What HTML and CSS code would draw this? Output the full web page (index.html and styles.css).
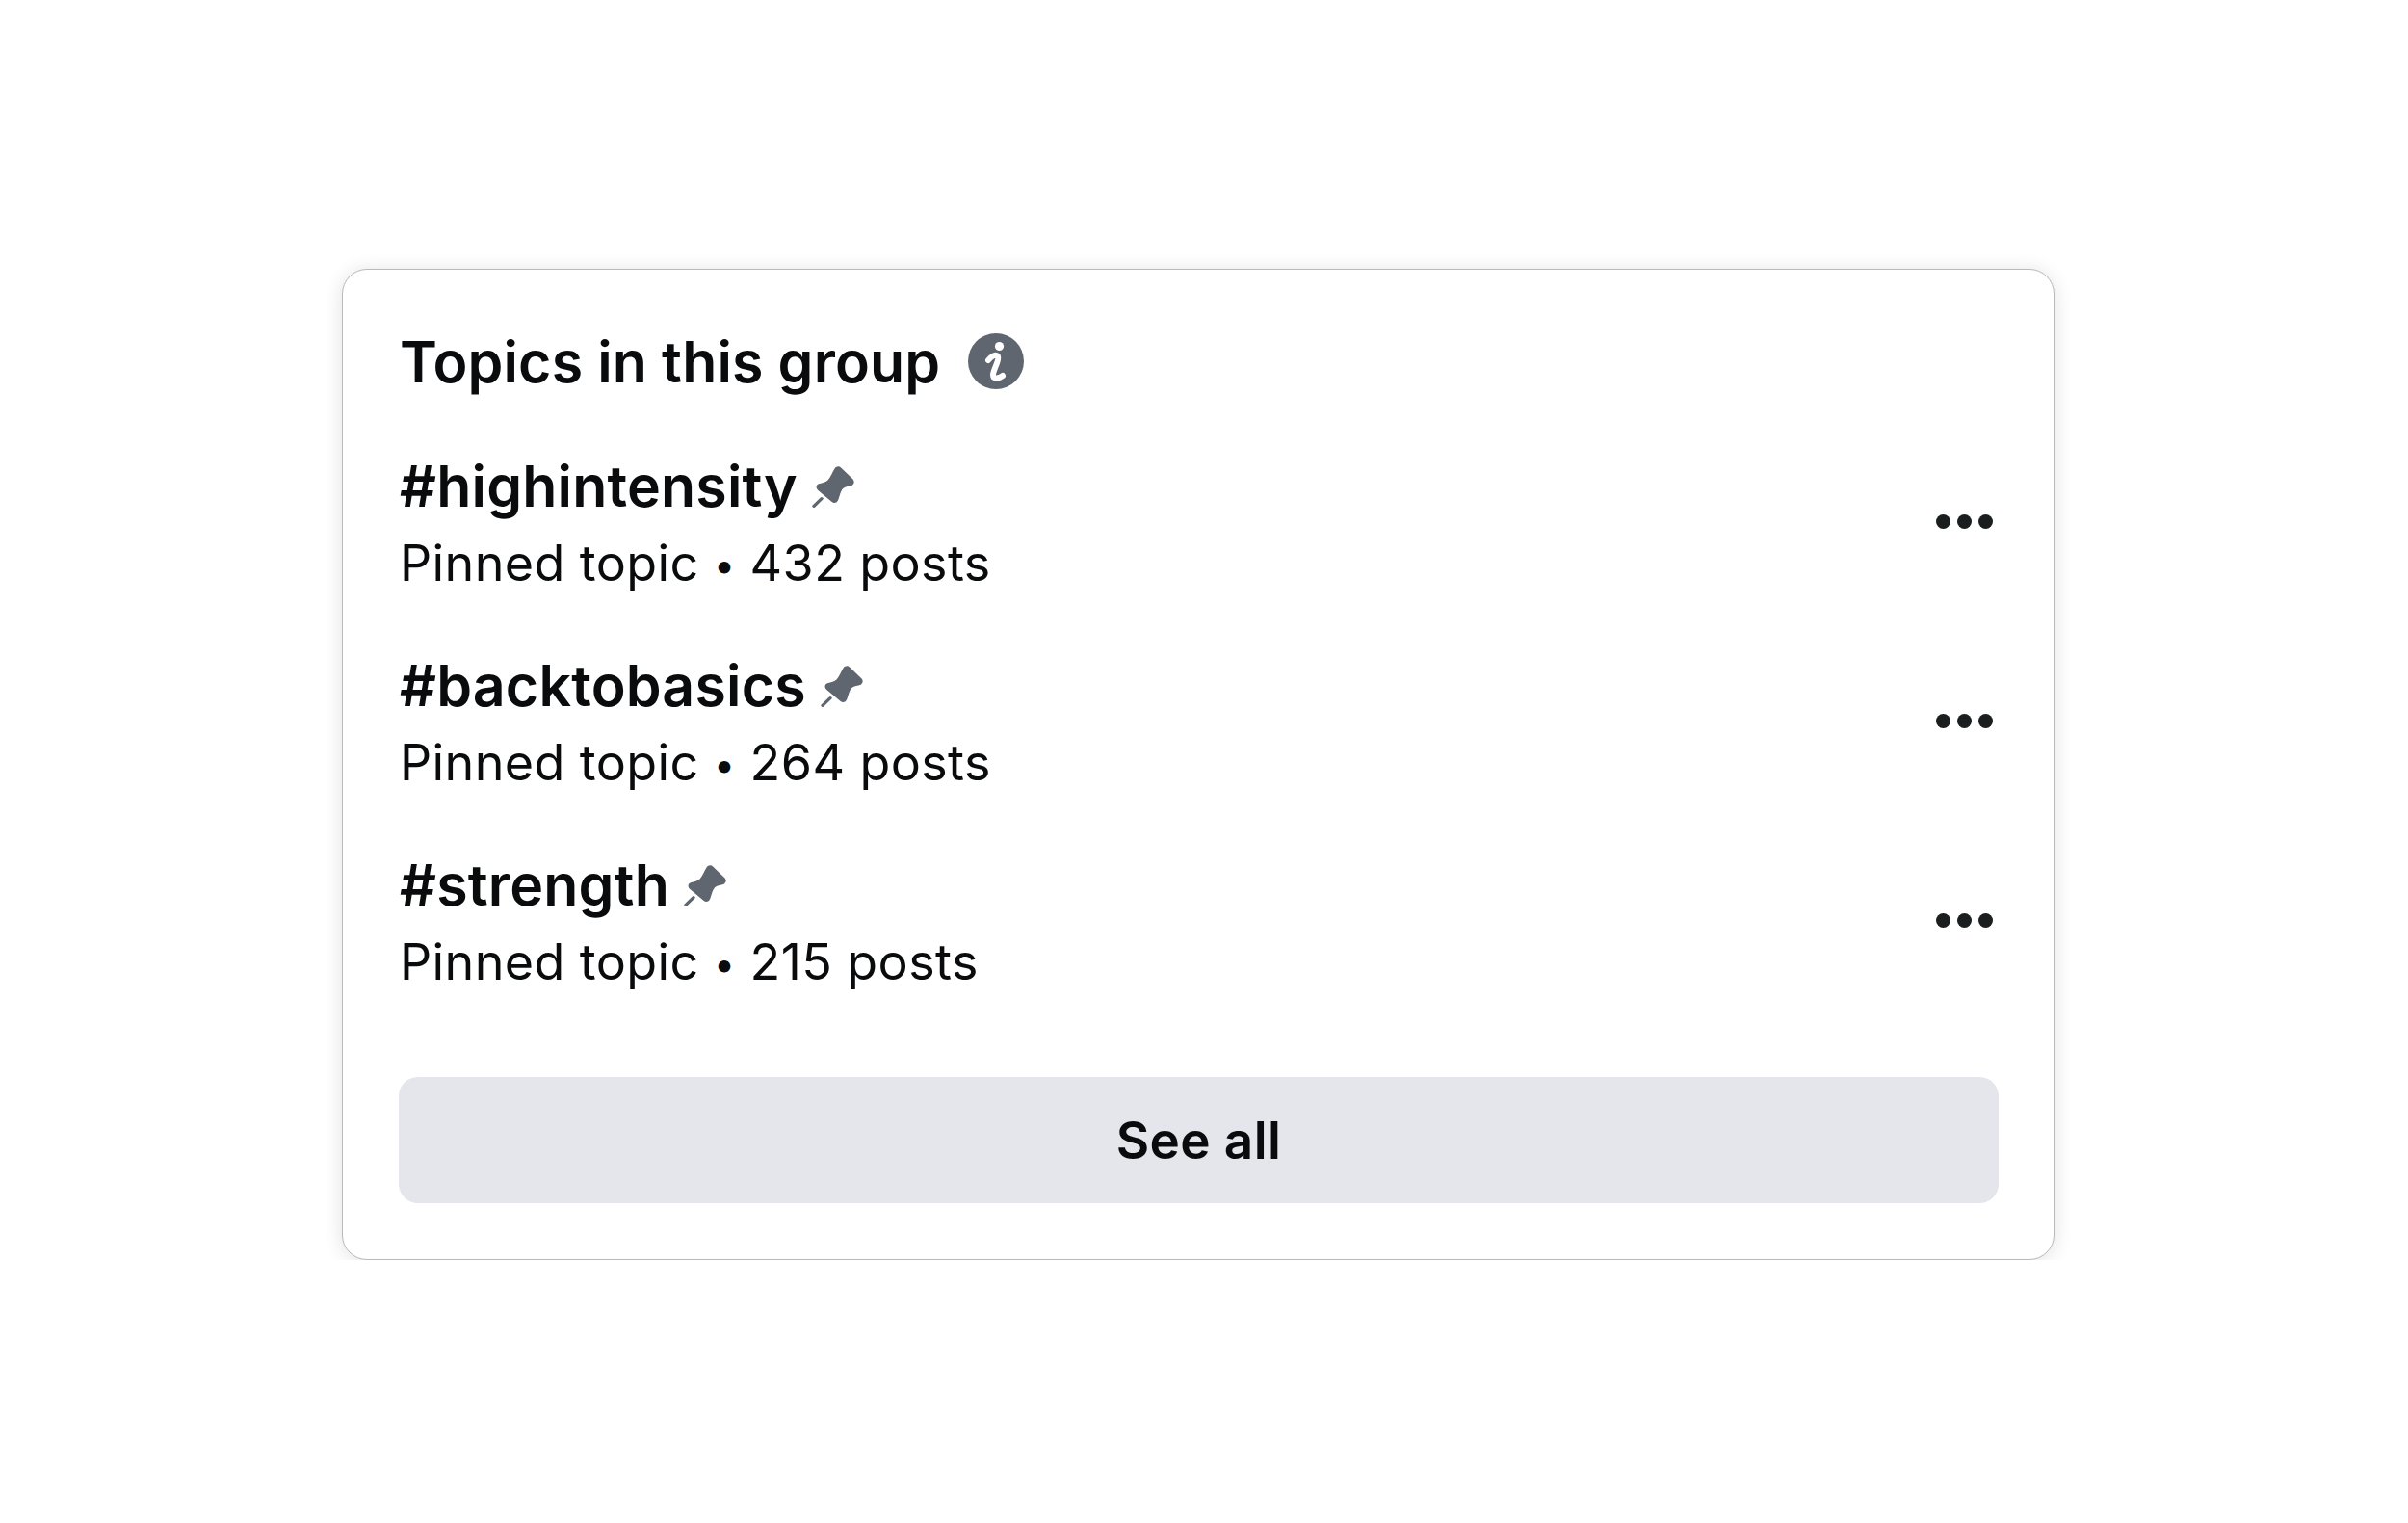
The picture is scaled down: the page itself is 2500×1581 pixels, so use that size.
FILE: index.html
```
<!DOCTYPE html>
<html>
<head>
    <link rel="stylesheet" href="styles.css">
</head>
<body>
    <svg class="icon-defs" width="0" height="0">
        <symbol id="pin" viewBox="70 40 135 132">
            <path d="M141 50 C146 43 155 42 161 48 L197 83 C203 89 202 98 195 102 C186 105 175 106 167 112 C160 119 158 130 152 147 C149 156 139 160 132 154 L88 117 C81 110 83 101 91 98 C103 94 113 93 120 86 C128 78 133 63 141 50 Z"/>
            <path class="pin-needle" d="M100 144 L76 167"/>
        </symbol>
    </svg>

    <div class="topics-card">
        <div class="topics-header">
            <h1 class="topics-title">Topics in this group</h1>
            <svg class="info-icon" viewBox="0 0 58 58">
                <circle cx="29" cy="29" r="29"/>
                <circle class="info-dot" cx="32.5" cy="13.5" r="4.6"/>
                <path class="info-stem" d="M21 28 C24 24 29 21 31 24 C33 28 26 38 26 43 C26 48 32 47 36 44"/>
            </svg>
        </div>

        <div class="topic-row">
            <div class="topic-text">
                <div class="topic-name">#highintensity <svg class="pin-icon"><use href="#pin"/></svg></div>
                <div class="topic-meta">Pinned topic <span class="topic-sep">•</span> 432 posts</div>
            </div>
            <div class="topic-more"><span></span><span></span><span></span></div>
        </div>

        <div class="topic-row">
            <div class="topic-text">
                <div class="topic-name">#backtobasics <svg class="pin-icon"><use href="#pin"/></svg></div>
                <div class="topic-meta">Pinned topic <span class="topic-sep">•</span> 264 posts</div>
            </div>
            <div class="topic-more"><span></span><span></span><span></span></div>
        </div>

        <div class="topic-row">
            <div class="topic-text">
                <div class="topic-name">#strength <svg class="pin-icon"><use href="#pin"/></svg></div>
                <div class="topic-meta">Pinned topic <span class="topic-sep">•</span> 215 posts</div>
            </div>
            <div class="topic-more"><span></span><span></span><span></span></div>
        </div>

        <button class="see-all-btn">See all</button>
    </div>
</body>
</html>
```

FILE: styles.css
```
* {
    margin: 0;
    padding: 0;
    box-sizing: border-box;
}

body {
    font-family: Inter, "Liberation Sans", sans-serif;
    background-color: #fff;
    color: #0a0b0c;
    padding: 279px 0 0 355px;
}

.icon-defs {
    display: block;
}

.topics-card {
    width: 1778px;
    height: 1029px;
    padding: 58px 57px 0 58px;
    background: #fff;
    border: 1px solid #b9babb;
    border-radius: 26px;
    box-shadow: 0 2px 20px rgba(0, 0, 0, 0.12);
}

.topics-header {
    display: flex;
    align-items: center;
    gap: 29px;
    height: 74px;
    margin-bottom: 26px;
}

.topics-title {
    font-size: 59px;
    font-weight: 600;
    letter-spacing: 0.15px;
    padding-left: 1px;
}

.info-icon {
    width: 58px;
    height: 58px;
    fill: #5f6670;
}

.info-dot {
    fill: #fff;
}

.info-stem {
    fill: none;
    stroke: #fff;
    stroke-width: 6;
    stroke-linecap: round;
}

.topic-row {
    display: flex;
    align-items: center;
    justify-content: space-between;
    height: 207px;
}

.topic-text {
    padding: 11px 0 0 1px;
}

.topic-name {
    display: flex;
    align-items: center;
    font-size: 59px;
    font-weight: 600;
    letter-spacing: 0.2px;
    line-height: 80px;
}

.pin-icon {
    width: 45px;
    height: 44px;
    margin-left: 15px;
    fill: #5f6670;
}

.pin-needle {
    fill: none;
    stroke: #5f6670;
    stroke-width: 10;
    stroke-linecap: round;
}

.topic-meta {
    font-size: 52px;
    line-height: 80px;
    letter-spacing: 0.4px;
}

.topic-sep {
    position: relative;
    top: -2px;
    font-size: 40px;
}

.topic-more {
    display: flex;
    gap: 7px;
    margin-right: 6px;
}

.topic-more span {
    width: 15px;
    height: 15px;
    background: #1a1e1f;
    border-radius: 50%;
}

.see-all-btn {
    display: block;
    width: 100%;
    height: 131px;
    margin-top: 59px;
    background-color: #e4e6eb;
    border: none;
    border-radius: 20px;
    font-family: inherit;
    font-size: 53px;
    font-weight: 600;
    letter-spacing: 0.4px;
    color: #0a0b0c;
}
```
